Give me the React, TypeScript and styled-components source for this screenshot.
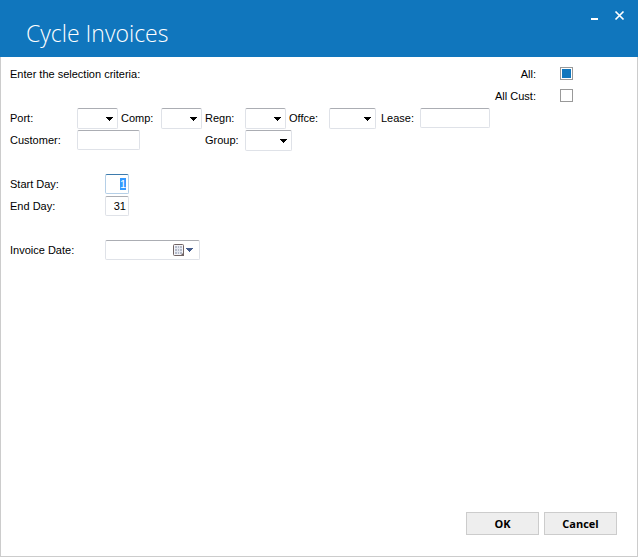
import { useEffect, useRef } from "react";
import styled, { createGlobalStyle } from "styled-components";

const GlobalStyle = createGlobalStyle`
  * { box-sizing: border-box; }
  body {
    margin: 0;
    background: #fff;
    color: #000;
    font-family: "Liberation Sans", Arial, sans-serif;
    font-size: 11px;
  }
`;

const Window = styled.div`
  min-height: 100vh;
  display: flex;
  flex-direction: column;
`;

const TitleBar = styled.header`
  display: flex;
  justify-content: space-between;
  align-items: flex-start;
  height: 57px;
  padding: 9px 12px 0 26px;
  background: #1076bd;
  color: #fff;
`;

const Title = styled.h1`
  margin: 7px 0 0;
  font: 300 23px/34px "Open Sans", "Segoe UI", sans-serif;
`;

const WindowButtons = styled.div`
  display: flex;
  gap: 12px;
`;

const WindowButton = styled.button`
  display: flex;
  width: 13px;
  height: 13px;
  padding: 0;
  border: 0;
  background: none;
  color: #fff;
`;

const Content = styled.form`
  flex: 1;
  display: flex;
  flex-direction: column;
  justify-content: space-between;
  padding: 7px 20px 21px 9px;
  border: 1px solid #ccc;
  border-top: 0;
`;

const Top = styled.div`
  display: flex;
  justify-content: space-between;
`;

const Text = styled.p`
  margin: 0;
  line-height: 20px;
`;

const Checks = styled.div`
  display: grid;
  grid-template-columns: auto 13px;
  grid-auto-rows: 22px;
  column-gap: 24px;
  justify-items: end;
  margin-right: 44px;
`;

const Label = styled.label`
  line-height: 20px;
  white-space: nowrap;
`;

const CheckBox = styled.input`
  appearance: none;
  width: 13px;
  height: 13px;
  margin: 3px 0 0;
  border: 1px solid #999;
  background: #fff;
  &:checked {
    background: #1076bd;
    box-shadow: inset 0 0 0 1px #fff;
  }
`;

const Criteria = styled.div`
  display: grid;
  grid-template-columns: 67px 44px 40px 44px 40px 44px 40px 52px 39px 70px;
  grid-auto-rows: 22px;
  align-items: start;
`;

const Days = styled.div`
  display: grid;
  grid-template-columns: 95px 95px;
  grid-auto-rows: 22px;
  align-items: start;
  margin-top: 22px;
`;

const Field = styled.input<{ $width: number }>`
  width: ${(p) => p.$width}px;
  height: 20px;
  padding: 0 2px;
  border: 1px solid #dfe2e8;
  border-top-color: #abadb3;
  border-radius: 2px;
  background: #fff;
  font: inherit;
  color: #000;
  outline: 0;
  &:focus {
    border-color: #b5cfe7;
    border-top-color: #3d7bad;
  }
  &::selection {
    background: #3399ff;
    color: #fff;
  }
`;

const NumberField = styled(Field)`
  text-align: right;
`;

const Customer = styled(Field)`
  grid-column: span 3;
`;

const SelectBox = styled.div<{ $width: number; $span?: number }>`
  position: relative;
  width: ${(p) => p.$width}px;
  height: 21px;
  grid-column: span ${(p) => p.$span ?? 1};
`;

const Select = styled.select`
  appearance: none;
  width: 100%;
  height: 21px;
  padding: 0 14px 0 3px;
  border: 1px solid #dfe2e8;
  border-top-color: #abadb3;
  border-radius: 2px;
  background: #fff;
  font: inherit;
  outline: 0;
`;

const Arrow = styled.svg`
  position: absolute;
  top: 9px;
  right: 5px;
  pointer-events: none;
`;

const DateBox = styled.div`
  display: flex;
  position: relative;
`;

const DateButton = styled.button`
  position: absolute;
  top: 3px;
  right: 5px;
  display: flex;
  padding: 0;
  border: 0;
  background: none;
`;

const Footer = styled.footer`
  display: flex;
  justify-content: flex-end;
  gap: 5px;
`;

const Action = styled.button`
  width: 73px;
  height: 23px;
  padding: 0;
  border: 1px solid #ccc;
  background: #eee;
  color: #000;
  font: 700 11px/21px "Open Sans", "Segoe UI", sans-serif;
`;

function DropDown({ id, width, span }: { id: string; width: number; span?: number }) {
  return (
    <SelectBox $width={width} $span={span}>
      <Select id={id}>
        <option value="" />
      </Select>
      <Arrow width="7" height="4" viewBox="0 0 7 4" shapeRendering="crispEdges">
        <path d="M0 0h7v1H6v1H5v1H4v1H3V3H2V2H1V1H0z" />
      </Arrow>
    </SelectBox>
  );
}

export default function App() {
  const startDay = useRef<HTMLInputElement>(null);

  useEffect(() => {
    startDay.current?.focus();
    startDay.current?.select();
  }, []);

  return (
    <Window>
      <GlobalStyle />
      <TitleBar>
        <Title>Cycle Invoices</Title>
        <WindowButtons>
          <WindowButton type="button" aria-label="Minimize">
            <svg width="13" height="13" viewBox="0 0 13 13">
              <path d="M3 9h7v2H3z" fill="currentColor" />
            </svg>
          </WindowButton>
          <WindowButton type="button" aria-label="Close">
            <svg width="13" height="13" viewBox="0 0 13 13">
              <path d="M2.5 2.5l8 8M10.5 2.5l-8 8" stroke="currentColor" strokeWidth="1.7" />
            </svg>
          </WindowButton>
        </WindowButtons>
      </TitleBar>
      <Content onSubmit={(e) => e.preventDefault()}>
        <div>
          <Top>
            <Text>Enter the selection criteria:</Text>
            <Checks>
              <Label htmlFor="all">All:</Label>
              <CheckBox id="all" type="checkbox" defaultChecked />
              <Label htmlFor="allCust">All Cust:</Label>
              <CheckBox id="allCust" type="checkbox" />
            </Checks>
          </Top>
          <Criteria>
            <Label htmlFor="port">Port:</Label>
            <DropDown id="port" width={41} />
            <Label htmlFor="comp">Comp:</Label>
            <DropDown id="comp" width={41} />
            <Label htmlFor="regn">Regn:</Label>
            <DropDown id="regn" width={41} />
            <Label htmlFor="offce">Offce:</Label>
            <DropDown id="offce" width={47} />
            <Label htmlFor="lease">Lease:</Label>
            <Field id="lease" $width={70} />
            <Label htmlFor="customer">Customer:</Label>
            <Customer id="customer" $width={63} />
            <Label htmlFor="group">Group:</Label>
            <DropDown id="group" width={47} span={2} />
          </Criteria>
          <Days>
            <Label htmlFor="startDay">Start Day:</Label>
            <NumberField id="startDay" ref={startDay} $width={24} defaultValue="1" />
            <Label htmlFor="endDay">End Day:</Label>
            <NumberField id="endDay" $width={24} defaultValue="31" />
          </Days>
          <Days>
            <Label htmlFor="invoiceDate">Invoice Date:</Label>
            <DateBox>
              <Field id="invoiceDate" $width={95} />
              <DateButton type="button" aria-label="Choose date">
                <svg width="22" height="14" viewBox="0 0 22 14">
                  <rect x="0.5" y="1.5" width="10" height="11" rx="1" fill="#f4f4f8" stroke="#716464" />
                  <path d="M2 3h7v8H2z" fill="#b4bbca" />
                  <path d="M2 5.5h7M2 8.5h7M4.5 3v8M6.5 3v8" stroke="#e4e7f0" />
                  <path d="M11 9v4H7z" fill="#716464" />
                  <path d="M13 5h7v1h-1v1h-1v1h-1v1h-1V8h-1V7h-1V6h-1z" fill="#455c8c" />
                </svg>
              </DateButton>
            </DateBox>
          </Days>
        </div>
        <Footer>
          <Action type="submit">OK</Action>
          <Action type="button">Cancel</Action>
        </Footer>
      </Content>
    </Window>
  );
}
